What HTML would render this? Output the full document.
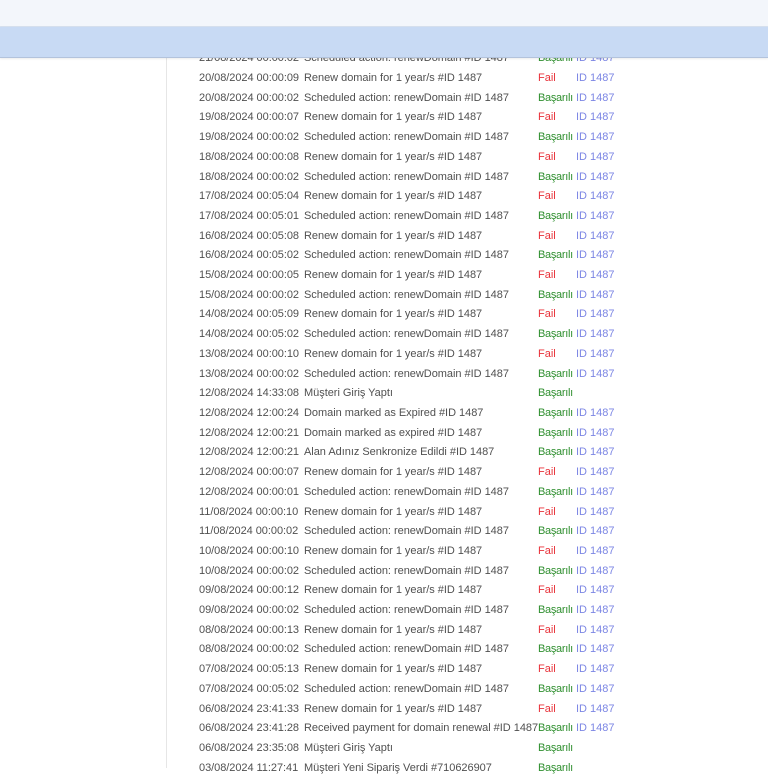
<!DOCTYPE html>
<html><head><meta charset="utf-8"><style>
html,body{margin:0;padding:0;width:768px;height:768px;overflow:hidden;background:#fff;font-family:"Liberation Sans",sans-serif}
#top{position:absolute;left:0;top:0;width:768px;height:26px;background:#f3f6fb;border-bottom:1px solid #d6e0ee;z-index:3}
#band{position:absolute;left:0;top:27px;width:768px;height:30px;background:#c8daf4;border-bottom:1px solid #b3c3dc;box-shadow:0 1px 2px rgba(0,0,0,.08);z-index:3}
#vline{position:absolute;left:166px;top:57px;width:1px;height:711px;background:#e6e6e6}
.r{position:absolute;left:0;height:19.7px;line-height:19.7px;font-size:11px;color:#505050;white-space:nowrap;width:768px}
.r span{position:absolute;top:0}
.d{left:199px;letter-spacing:-0.05px}
.m{left:304px;letter-spacing:-0.03px}
.s{left:538px}
.f{color:#e8323a}.b{color:#2f8f2f;letter-spacing:-0.3px}
.i{left:576px;color:#7c86e4}
</style></head><body>
<div id="top"></div><div id="band"></div><div id="vline"></div>
<div id="rows"></div>
<script>
var S="Scheduled action: renewDomain #ID 1487",R="Renew domain for 1 year/s #ID 1487";
var rows=[
["21/08/2024 00:00:02",S,1,1],["20/08/2024 00:00:09",R,0,1],["20/08/2024 00:00:02",S,1,1],
["19/08/2024 00:00:07",R,0,1],["19/08/2024 00:00:02",S,1,1],["18/08/2024 00:00:08",R,0,1],
["18/08/2024 00:00:02",S,1,1],["17/08/2024 00:05:04",R,0,1],["17/08/2024 00:05:01",S,1,1],
["16/08/2024 00:05:08",R,0,1],["16/08/2024 00:05:02",S,1,1],["15/08/2024 00:00:05",R,0,1],
["15/08/2024 00:00:02",S,1,1],["14/08/2024 00:05:09",R,0,1],["14/08/2024 00:05:02",S,1,1],
["13/08/2024 00:00:10",R,0,1],["13/08/2024 00:00:02",S,1,1],["12/08/2024 14:33:08","Müşteri Giriş Yaptı",1,0],
["12/08/2024 12:00:24","Domain marked as Expired #ID 1487",1,1],["12/08/2024 12:00:21","Domain marked as expired #ID 1487",1,1],
["12/08/2024 12:00:21","Alan Adınız Senkronize Edildi #ID 1487",1,1],["12/08/2024 00:00:07",R,0,1],
["12/08/2024 00:00:01",S,1,1],["11/08/2024 00:00:10",R,0,1],["11/08/2024 00:00:02",S,1,1],
["10/08/2024 00:00:10",R,0,1],["10/08/2024 00:00:02",S,1,1],["09/08/2024 00:00:12",R,0,1],
["09/08/2024 00:00:02",S,1,1],["08/08/2024 00:00:13",R,0,1],["08/08/2024 00:00:02",S,1,1],
["07/08/2024 00:05:13",R,0,1],["07/08/2024 00:05:02",S,1,1],["06/08/2024 23:41:33",R,0,1],
["06/08/2024 23:41:28","Received payment for domain renewal #ID 1487",1,1],["06/08/2024 23:35:08","Müşteri Giriş Yaptı",1,0],
["03/08/2024 11:27:41","Müşteri Yeni Sipariş Verdi #710626907",1,0]];
var h="";
rows.forEach(function(r,k){var t=49.3+k*19.706;
h+='<div class="r" style="top:'+t.toFixed(2)+'px"><span class="d">'+r[0]+'</span><span class="m">'+r[1]+'</span><span class="s '+(r[2]?'b':'f')+'">'+(r[2]?'Başarılı':'Fail')+'</span>'+(r[3]?'<span class="i">ID 1487</span>':'')+'</div>';});
document.getElementById("rows").innerHTML=h;
</script>
</body></html>
